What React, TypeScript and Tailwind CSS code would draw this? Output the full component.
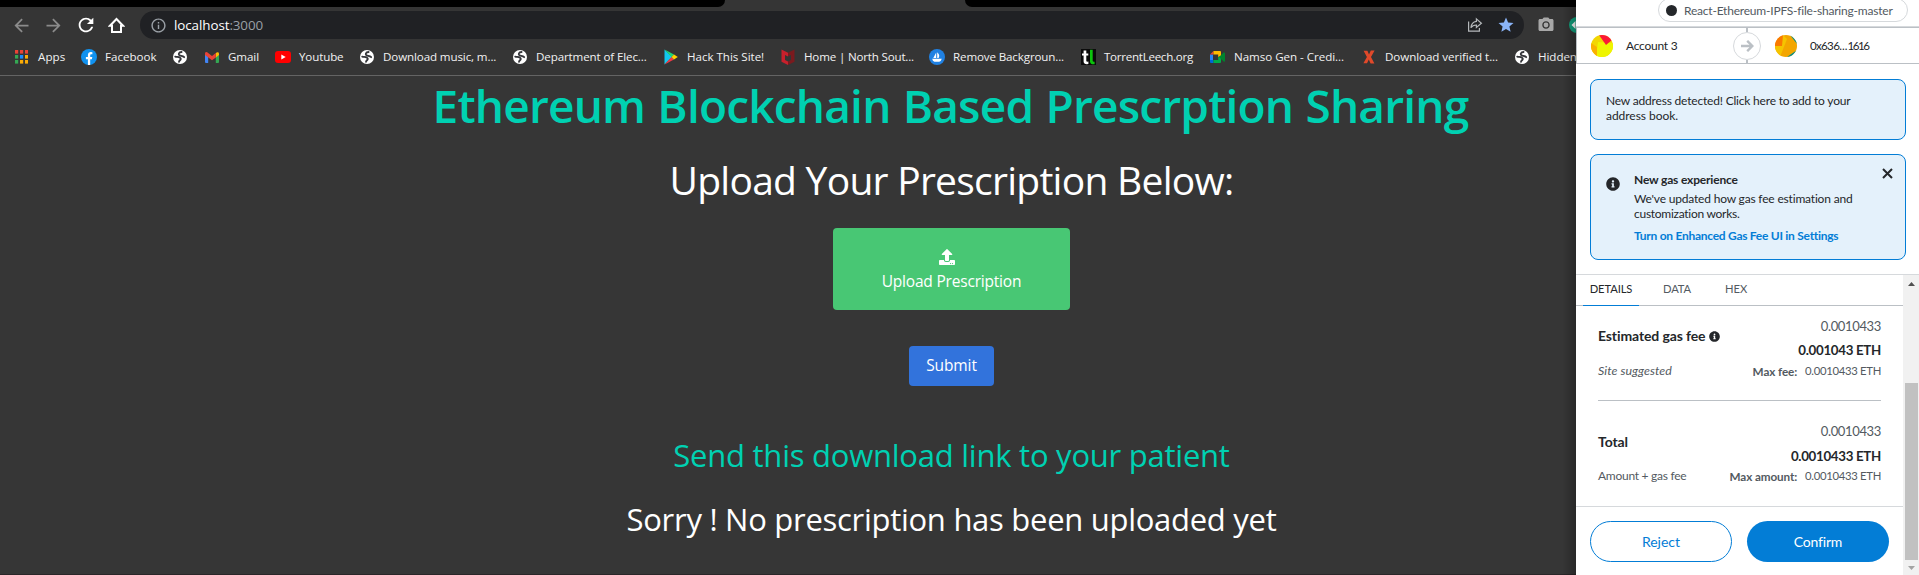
import React, { ReactNode } from "react";
import { MdArrowBack, MdArrowForward, MdRefresh, MdInfoOutline, MdStar, MdPhotoCamera } from "react-icons/md";
import { FaUpload, FaInfoCircle } from "react-icons/fa";

const HomeIcon = () => (
  <svg width="17" height="17" viewBox="0 0 17 17" fill="none" stroke="#fff" strokeWidth="2">
    <path d="M8.5 2 L15 8.7 H13 V15 H4 V8.7 H2 Z" />
  </svg>
);

const ShareIcon = () => (
  <svg width="16" height="16" viewBox="0 0 16 16" fill="none" stroke="#b4b7ba" strokeWidth="1.2">
    <path d="M1.6 4.5 V14.2 H12.4 V11" />
    <path d="M9.4 1.9 L14.4 6.2 L9.4 10.4 V8 C6.6 8 5 8.9 3.9 10.8 C4.2 7.4 6 4.9 9.4 4.4 Z" />
  </svg>
);

const AppsIcon = () => (
  <svg width="13" height="14" viewBox="0 0 13 14">
    {["#ea4335", "#ea4335", "#ea4335", "#34a853", "#1a8cff", "#fbab05", "#34a853", "#fbab05", "#fbab05"].map((c, i) => (
      <rect key={i} x={(i % 3) * 5} y={Math.floor(i / 3) * 5} width="3.2" height="3.6" fill={c} />
    ))}
  </svg>
);

const GlobeIcon = () => (
  <svg width="14" height="14" viewBox="0 0 14 14">
    <circle cx="7" cy="7" r="7" fill="#fff" />
    <path d="M8.6 2 C5.6 2.2 5.2 4.2 6.4 5.2 C7.6 6.2 9.6 5.4 11.2 7.2" fill="none" stroke="#35363a" strokeWidth="1.8" strokeLinecap="round" />
    <path d="M2.2 6.6 C4.4 7.2 7.6 6.8 7.8 8.8 C7.9 10.2 6.2 10.2 6 11.8" fill="none" stroke="#35363a" strokeWidth="1.8" strokeLinecap="round" />
  </svg>
);

const FacebookIcon = () => (
  <svg width="16" height="16" viewBox="0 0 16 16">
    <circle cx="8" cy="8" r="8" fill="#1092f0" />
    <path d="M6.9 16 V10.3 H4.9 V8 H6.9 V6.3 C6.9 4.2 8.1 3.1 9.9 3.1 L11.4 3.2 V5.2 H10.4 C9.5 5.2 9.2 5.7 9.2 6.4 V8 H11.3 L10.9 10.3 H9.2 V16 Z" fill="#fff" />
  </svg>
);

const GmailIcon = () => (
  <svg width="14" height="11" viewBox="0 0 14 11">
    <path d="M0 2 L3.2 4.4 V11 H1 Q0 11 0 10 Z" fill="#4285f4" />
    <path d="M14 2 L10.8 4.4 V11 H13 Q14 11 14 10 Z" fill="#34a853" />
    <path d="M10.8 1 L12.2 .2 Q14 0 14 1.6 V3 L10.8 5.4 Z" fill="#fbbc04" />
    <path d="M0 3 V1.6 Q.2 -.4 2.2 .3 L7 3.9 L10.8 1 V5.4 L7 8.2 Z" fill="#ea4335" />
  </svg>
);

const YoutubeIcon = () => (
  <svg width="16" height="12" viewBox="0 0 16 12">
    <rect width="16" height="12" rx="3" fill="#f00" />
    <path d="M6.3 3.4 L10.7 6 L6.3 8.6 Z" fill="#fff" />
  </svg>
);

const PlayIcon = () => (
  <svg width="14" height="16" viewBox="0 0 14 16">
    <path d="M.5 .5 L8 8 L.5 15.5 Z" fill="#12c8ee" />
    <path d="M.5 .5 L10 5.6 L7.5 8 Z" fill="#20d67a" />
    <path d="M.5 15.5 L10 10.4 L7.5 8 Z" fill="#ee3a48" />
    <path d="M10 5.6 L13.8 8 L10 10.4 L7.5 8 Z" fill="#ffd200" />
  </svg>
);

const ShieldIcon = () => (
  <svg width="14" height="16" viewBox="0 0 14 16">
    <path d="M.5 .5 L7 3.8 V7.6 L4 6 V11 L7 12.6 V16 L.5 12.8 Z" fill="#c8202c" />
    <path d="M13.5 .5 L7 3.8 V7.6 L10 6 V11 L7 12.6 V16 L13.5 12.8 Z" fill="#7b1a1e" />
  </svg>
);

const BoatIcon = () => (
  <svg width="16" height="16" viewBox="0 0 16 16">
    <circle cx="8" cy="8" r="8" fill="#2081e2" />
    <path d="M7.2 3.6 V9 H4.3 Z M8.2 3.2 Q11.4 6 9.6 9 H8.2 Z M3.2 9.8 H12.8 Q12 12.6 10.2 12.8 H5.4 Q3.6 12.2 3.2 9.8 Z" fill="#fff" />
  </svg>
);

const TorrentIcon = () => (
  <svg width="15" height="16" viewBox="0 0 15 16">
    <rect width="15" height="16" fill="#0b0b0b" />
    <path d="M2.6 1.5 H5.3 V4.5 H7.3 V6.5 H5.3 V12 Q5.4 13 7.4 12.6 V15 Q2.8 15.8 2.6 12.4 V6.5 H1 V4.5 H2.6 Z" fill="#fff" />
    <path d="M9 .8 H11.7 V12 Q11.8 13 13.6 12.8 V15.2 Q9.2 15.6 9 12.4 Z" fill="#0cc40c" />
  </svg>
);

const MeetIcon = () => (
  <svg width="15" height="12" viewBox="0 0 15 12">
    <rect x="0" y="3.5" width="3" height="5.5" fill="#2684fc" />
    <path d="M0 3.5 L3.5 0 V3.5 Z" fill="#ea4335" />
    <path d="M3.5 0 H10 Q11 0 11 1 V5 L8.2 6 V3.5 H3.5 Z" fill="#ffba00" />
    <path d="M0 9 H3.5 V12 H1 Q0 12 0 11 Z" fill="#0066da" />
    <path d="M3.5 9 H8.2 V6 L11 5.5 V11 Q11 12 10 12 H3.5 Z" fill="#00ac47" />
    <path d="M9 6 L13.6 1.6 Q15 1 15 2 V10 Q15 11 13.6 10.4 Z" fill="#00832d" />
  </svg>
);

const XIcon = () => (
  <svg width="12" height="14" viewBox="0 0 12 14">
    <path d="M.6 .8 H4.4 L6 4.4 L7.8 .4 H11.6 L8 7 L11.4 13.6 H7.6 L5.8 9.6 L4 13.2 H.4 L3.9 7 Z" fill="#e0492a" />
  </svg>
);

type Bookmark = { icon: ReactNode; label?: string; width: string; iconBox: string; tracking?: string };

const bookmarks: Bookmark[] = [
  { icon: <AppsIcon />, label: "Apps", width: "w-[66px]", iconBox: "w-[23px]", tracking: "tracking-[0.05px]" },
  { icon: <FacebookIcon />, label: "Facebook", width: "w-[92px]", iconBox: "w-[24px]", tracking: "tracking-[0px]" },
  { icon: <GlobeIcon />, width: "w-[32px]", iconBox: "w-[23px]" },
  { icon: <GmailIcon />, label: "Gmail", width: "w-[70px]", iconBox: "w-[23px]", tracking: "tracking-[-0.1px]" },
  { icon: <YoutubeIcon />, label: "Youtube", width: "w-[85px]", iconBox: "w-[24px]", tracking: "tracking-[-0.13px]" },
  { icon: <GlobeIcon />, label: "Download music, m...", width: "w-[153px]", iconBox: "w-[23px]", tracking: "tracking-[-0.12px]" },
  { icon: <GlobeIcon />, label: "Department of Elec...", width: "w-[151px]", iconBox: "w-[23px]", tracking: "tracking-[-0.13px]" },
  { icon: <PlayIcon />, label: "Hack This Site!", width: "w-[117px]", iconBox: "w-[23px]", tracking: "tracking-[-0.03px]" },
  { icon: <ShieldIcon />, label: "Home | North Sout...", width: "w-[148px]", iconBox: "w-[23px]", tracking: "tracking-[-0.18px]" },
  { icon: <BoatIcon />, label: "Remove Backgroun...", width: "w-[152px]", iconBox: "w-[24px]", tracking: "tracking-[-0.14px]" },
  { icon: <TorrentIcon />, label: "TorrentLeech.org", width: "w-[129px]", iconBox: "w-[23px]", tracking: "tracking-[-0.28px]" },
  { icon: <MeetIcon />, label: "Namso Gen - Credi...", width: "w-[153px]", iconBox: "w-[24px]", tracking: "tracking-[-0.04px]" },
  { icon: <XIcon />, label: "Download verified t...", width: "w-[152px]", iconBox: "w-[22px]", tracking: "tracking-[-0.07px]" },
  { icon: <GlobeIcon />, label: "Hidden", width: "w-[70px]", iconBox: "w-[23px]", tracking: "tracking-[-0.06px]" },
];

function BrowserChrome() {
  return (
    <header className="flex h-[76px] flex-col border-b border-[#646464] bg-[#353535]">
      <div className="flex h-[7px] justify-between">
        <div className="w-[725px] rounded-br-[7px] bg-black" />
        <div className="w-[938px] rounded-bl-[7px] bg-black" />
      </div>
      <div className="flex h-[36px] items-center pl-[11px]">
        <MdArrowBack className="mr-[11px] size-[21px] text-[#8b8b8b]" />
        <MdArrowForward className="mr-[11px] size-[21px] text-[#8b8b8b]" />
        <MdRefresh className="mr-[11px] size-[22px] text-white" />
        <HomeIcon />
        <div className="ml-[15px] flex h-[28px] w-[1384px] items-center rounded-full bg-[#202124] pl-[10px] pr-[9px]">
          <MdInfoOutline className="size-[17px] text-[#9aa0a6]" />
          <span className="ml-[7px] text-[13.4px] tracking-[-0.08px] text-white">localhost</span>
          <span className="text-[13.4px] tracking-[-0.1px] text-[#9aa0a6]">:3000</span>
          <div className="ml-auto flex items-center gap-[14px]">
            <ShareIcon />
            <MdStar className="size-[18px] text-[#8ab4f8]" />
          </div>
        </div>
        <MdPhotoCamera className="ml-[13px] size-[18px] text-[#a8a8a8]" />
        <svg className="ml-[14px]" width="16" height="16" viewBox="0 0 16 16">
          <circle cx="8" cy="8" r="8" fill="#11a37f" />
          <path d="M2.5 8 L6.5 4 V12 Z" fill="#fff" />
        </svg>
      </div>
      <nav className="flex h-[28px] items-center pl-[15px] text-[11.6px] leading-5 text-[#f1f1f1]">
        {bookmarks.map((b, i) => (
          <div key={i} className={`flex shrink-0 items-center whitespace-nowrap ${b.width}`}>
            <span className={`shrink-0 ${b.iconBox}`}>{b.icon}</span>
            <span className={b.tracking}>{b.label}</span>
          </div>
        ))}
      </nav>
    </header>
  );
}

function Page() {
  return (
    <main className="flex h-[499px] flex-col items-center whitespace-nowrap border-b border-[#2a2628] pt-[2px]">
      <h1 className="mr-[2px] text-[46px] font-semibold leading-[54px] tracking-[-0.8px] text-[#00d1b2] [word-spacing:1px]">
        Ethereum Blockchain Based Prescrption Sharing
      </h1>
      <h2 className="mt-[18px] text-[39px] leading-[60px] tracking-[-0.74px] text-white">Upload Your Prescription Below:</h2>
      <button className="mt-[18px] flex h-[82px] w-[237px] flex-col items-center rounded-[4px] bg-[#48c774] pt-[21px] text-white">
        <FaUpload className="mr-[9px] size-[16px]" />
        <span className="mt-[4px] text-[15.5px] leading-6 tracking-[-0.2px]">Upload Prescription</span>
      </button>
      <button className="mt-[36px] h-[40px] w-[85px] rounded-[4px] bg-[#3273dc] text-[15.5px] tracking-[-0.1px] text-white">
        Submit
      </button>
      <p className="mt-[49px] text-[31px] leading-10 tracking-[-0.24px] text-[#00d1b2]">Send this download link to your patient</p>
      <p className="mt-[24px] text-[31px] leading-10 tracking-[-0.28px] text-white">Sorry ! No prescription has been uploaded yet</p>
    </main>
  );
}

type FeeProps = {
  title: ReactNode;
  note: ReactNode;
  primary: string;
  limitLabel: string;
  leftPad: string;
  leftGap: string;
  midGap: string;
  endGap: string;
};

function FeeRow({ title, note, primary, limitLabel, leftPad, leftGap, midGap, endGap }: FeeProps) {
  return (
    <div className="flex justify-between">
      <div className={`flex flex-col ${leftPad} ${leftGap}`}>
        {title}
        {note}
      </div>
      <div className="flex flex-col items-end leading-5">
        <span className="text-[13px] tracking-[-0.35px] text-[#535a61]">0.0010433</span>
        <span className={`text-[13.3px] font-bold tracking-[-0.3px] text-[#24272a] ${midGap}`}>{primary}</span>
        <div className={`flex gap-2 text-[#535a61] ${endGap}`}>
          <span className="text-[11.7px] font-bold tracking-[-0.1px]">{limitLabel}</span>
          <span className="text-[11.3px] tracking-[-0.3px]">0.0010433 ETH</span>
        </div>
      </div>
    </div>
  );
}

function Wallet() {
  return (
    <aside className="absolute right-0 top-0 flex h-[575px] w-[343px] flex-col overflow-hidden whitespace-nowrap bg-white font-['Lato','Liberation_Sans',sans-serif] text-[12px] leading-[15px] text-[#24272a]">
      <div className="h-[27px] border-b border-[#d6d9dc]">
        <div className="-mt-[2px] ml-[82px] flex h-[24px] w-[250px] items-center rounded-full border border-[#d6d9dc] pl-[7px]">
          <span className="size-[11px] rounded-full bg-[#24272a]" />
          <span className="ml-[7px] tracking-[-0.21px] text-[#535a61]">React-Ethereum-IPFS-file-sharing-master</span>
        </div>
      </div>
      <div className="flex h-[37px] items-center border-y border-l border-[#bbc0c5] pl-[14px]">
        <svg width="22" height="22" viewBox="0 0 22 22">
          <clipPath id="a"><circle cx="11" cy="11" r="11" /></clipPath>
          <g clipPath="url(#a)">
            <rect width="22" height="22" fill="#f2d602" />
            <path d="M7 7 L22 8 V22 H5 Z" fill="#eef500" />
            <path d="M0 8 L6 12 V22 H0 Z" fill="#fab001" />
            <path d="M8 0 H18 L21 5 L15 10 Z" fill="#fb1836" />
          </g>
        </svg>
        <span className="ml-[13px] w-[107px] tracking-[-0.25px]">Account 3</span>
        <div className="flex h-[35px] flex-col items-center">
          <span className="h-[4px] w-[2px] bg-[#bbc0c5]" />
          <span className="flex size-[28px] items-center justify-center rounded-full border border-[#d6d9dc]">
            <svg width="13" height="12" viewBox="0 0 13 12" fill="none" stroke="#bbc0c5" strokeWidth="2.4">
              <path d="M0 6 H11.5 M6.2 .8 L11.4 6 L6.2 11.2" />
            </svg>
          </span>
          <span className="h-[3px] w-[2px] bg-[#bbc0c5]" />
        </div>
        <svg className="ml-[14px]" width="22" height="22" viewBox="0 0 22 22">
          <clipPath id="b"><circle cx="11" cy="11" r="11" /></clipPath>
          <g clipPath="url(#b)">
            <rect width="22" height="22" fill="#f3a600" />
            <path d="M0 0 H8 V11 H0 Z" fill="#fa7900" />
            <path d="M8 0 L12 4 L5 22 L0 20 V11 H7 Z" fill="#f5c400" />
            <path d="M15 0 L22 9 V15 L12 22 H22 V0 Z" fill="#018e8e" />
          </g>
        </svg>
        <span className="ml-[13px] flex text-[11.6px]">
          <span className="tracking-[-0.7px]">0x636</span>
          <span className="tracking-[0px]">...</span>
          <span className="tracking-[-1.4px]">1616</span>
        </span>
      </div>
      <div className="ml-[14px] mt-[15px] h-[61px] w-[316px] rounded-[8px] border border-[#037dd6] bg-[#e4f1fb] pl-[15px] pt-[13px]">
        <p className="tracking-[-0.19px]">New address detected! Click here to add to your</p>
        <p className="tracking-[-0.04px]">address book.</p>
      </div>
      <div className="ml-[14px] mt-[14px] flex h-[106px] w-[316px] rounded-[8px] border border-[#037dd6] bg-[#e4f1fb] pl-[15px]">
        <FaInfoCircle className="mt-[22px] size-[14px]" />
        <div className="ml-[14px] w-[248px] pt-[17px]">
          <p className="font-bold tracking-[-0.17px]">New gas experience</p>
          <p className="mt-[4px] tracking-[-0.18px]">We've updated how gas fee estimation and</p>
          <p className="tracking-[-0.27px]">customization works.</p>
          <p className="mt-[7px] font-bold tracking-[-0.27px] text-[#037dd6]">Turn on Enhanced Gas Fee UI in Settings</p>
        </div>
        <svg className="mt-[13px]" width="11" height="11" viewBox="0 0 11 11" stroke="#24272a" strokeWidth="2">
          <path d="M1 1 L10 10 M10 1 L1 10" />
        </svg>
      </div>
      <div className="mt-[14px] flex h-[301px] border-t border-[#d6d9dc]">
        <div className="w-[327px]">
          <div className="flex h-[31px] border-b border-[#bbc0c5] pl-[7px] text-[11.2px] leading-[27px]">
            <span className="-mb-px w-[56px] border-b border-[#037dd6] text-center tracking-[-0.1px]">DETAILS</span>
            <span className="ml-[24px] w-[62px] tracking-[-0.1px] text-[#535a61]">DATA</span>
            <span className="tracking-[0px] text-[#535a61]">HEX</span>
          </div>
          <div className="h-[201px] border-b border-[#d6d9dc] pl-[22px] pr-[22px] pt-[10px]">
            <FeeRow
              title={
                <div className="flex items-center gap-[4px] text-[14px] font-bold leading-5 tracking-[-0.12px]">
                  Estimated gas fee
                  <FaInfoCircle className="size-[11px]" />
                </div>
              }
              note={<span className="text-[12.4px] italic leading-5 tracking-[0.05px] text-[#535a61]">Site suggested</span>}
              primary="0.001043 ETH"
              limitLabel="Max fee:"
              leftPad="pt-[10px]"
              leftGap="gap-[15px]"
              midGap="mt-[4px]"
              endGap="mt-[1px]"
            />
            <hr className="mb-[20px] mt-[19px] border-[#bbc0c5]" />
            <FeeRow
              title={<span className="text-[14px] font-bold leading-5 tracking-[-0.08px]">Total</span>}
              note={<span className="leading-5 tracking-[-0.27px] text-[#535a61]">Amount + gas fee</span>}
              primary="0.0010433 ETH"
              limitLabel="Max amount:"
              leftPad="pt-[11px]"
              leftGap="gap-[14px]"
              midGap="mt-[5px]"
              endGap="mt-[0px]"
            />
          </div>
          <div className="flex gap-[15px] pl-[14px] pt-[14px] text-[14px]">
            <button className="h-[41px] w-[142px] rounded-full border border-[#037dd6] text-[#037dd6]">Reject</button>
            <button className="h-[41px] w-[142px] rounded-full bg-[#037dd6] tracking-[-0.2px] text-white">Confirm</button>
          </div>
        </div>
        <div className="flex w-[16px] flex-col items-center bg-[#f1f1f1]">
          <svg className="mt-[7px]" width="7" height="4" viewBox="0 0 7 4"><path d="M0 4 L3.5 0 L7 4 Z" fill="#505050" /></svg>
          <div className="mt-[97px] h-[177px] w-[13px] bg-[#c1c1c1]" />
          <svg className="mt-[6px]" width="7" height="4" viewBox="0 0 7 4"><path d="M0 0 L3.5 4 L7 0 Z" fill="#a3a3a3" /></svg>
        </div>
      </div>
    </aside>
  );
}

export default function App() {
  return (
    <div className="relative h-[575px] w-[1919px] overflow-hidden bg-[#363636] font-['Open_Sans','Noto_Sans',sans-serif]">
      <div className="w-[1903px]">
        <BrowserChrome />
        <Page />
      </div>
      <div className="absolute right-[343px] top-0 h-[575px] w-[14px] bg-gradient-to-l from-black/25 to-transparent" />
      <Wallet />
    </div>
  );
}
